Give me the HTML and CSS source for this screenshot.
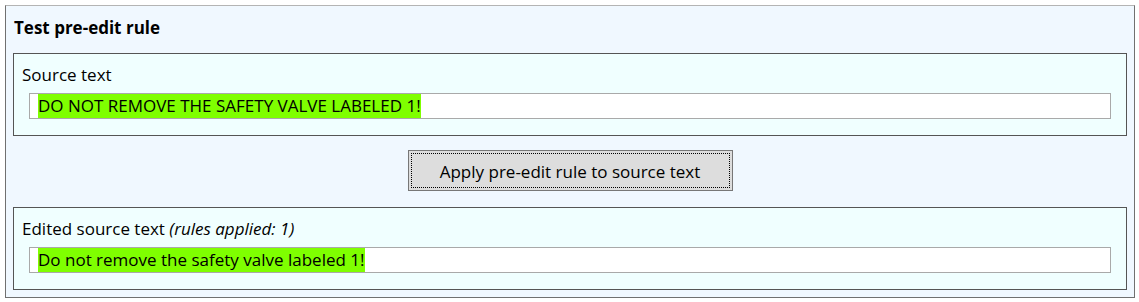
FILE: index.html
```html
<!DOCTYPE html>
<html>
<head>
<meta charset="utf-8">
<link rel="stylesheet" href="styles.css">
</head>
<body>
<div class="panel">
  <div class="title">Test pre-edit rule</div>
  <div class="box">
    <div class="label">Source text</div>
    <div class="field"><span class="hl">DO NOT REMOVE THE SAFETY VALVE LABELED 1!</span></div>
  </div>
  <div class="actions">
    <button class="btn" type="button">Apply pre-edit rule to source text</button>
  </div>
  <div class="box">
    <div class="label">Edited source text <i>(rules applied: 1)</i></div>
    <div class="field"><span class="hl">Do not remove the safety valve labeled 1!</span></div>
  </div>
</div>
</body>
</html>
```
FILE: styles.css
```css
html, body {
  margin: 0;
  padding: 0;
  background: #ffffff;
}
body {
  font-family: "Open Sans", "Noto Sans", sans-serif;
  font-size: 17px;
  color: #000;
}
.panel {
  margin: 5px;
  width: 1130px;
  height: 293px;
  box-sizing: border-box;
  background: #f0f8ff;
  border: 1px solid #707070;
  border-top-color: #b4b4b4;
  padding: 0 7px 7px 7px;
  display: flex;
  flex-direction: column;
}
.title {
  font-weight: bold;
  line-height: 22px;
  padding: 11px 0 0 1px;
  height: 47px;
  box-sizing: border-box;
}
.box {
  background: #f0ffff;
  border: 1px solid #555;
  padding: 10px 15px 15px 8px;
  height: 83px;
  box-sizing: border-box;
}
.label {
  line-height: 22px;
  margin-bottom: 7px;
}
.field {
  background: #fff;
  border: 1px solid #a9a9a9;
  height: 26px;
  box-sizing: border-box;
  margin-left: 7px;
  padding-left: 8px;
  display: flex;
  align-items: center;
}
.hl {
  background: #7fff00;
  line-height: 24px;
}
.actions {
  display: flex;
  justify-content: center;
  padding: 14px 0 16px 0;
}
.btn {
  width: 325px;
  height: 41px;
  background: #dddddd;
  border: 1px solid #777;
  outline: 1px dotted #000;
  outline-offset: -4px;
  font-family: inherit;
  font-size: 17px;
  color: #000;
  padding: 2px 0 0 0;
  border-radius: 0;
}
```
